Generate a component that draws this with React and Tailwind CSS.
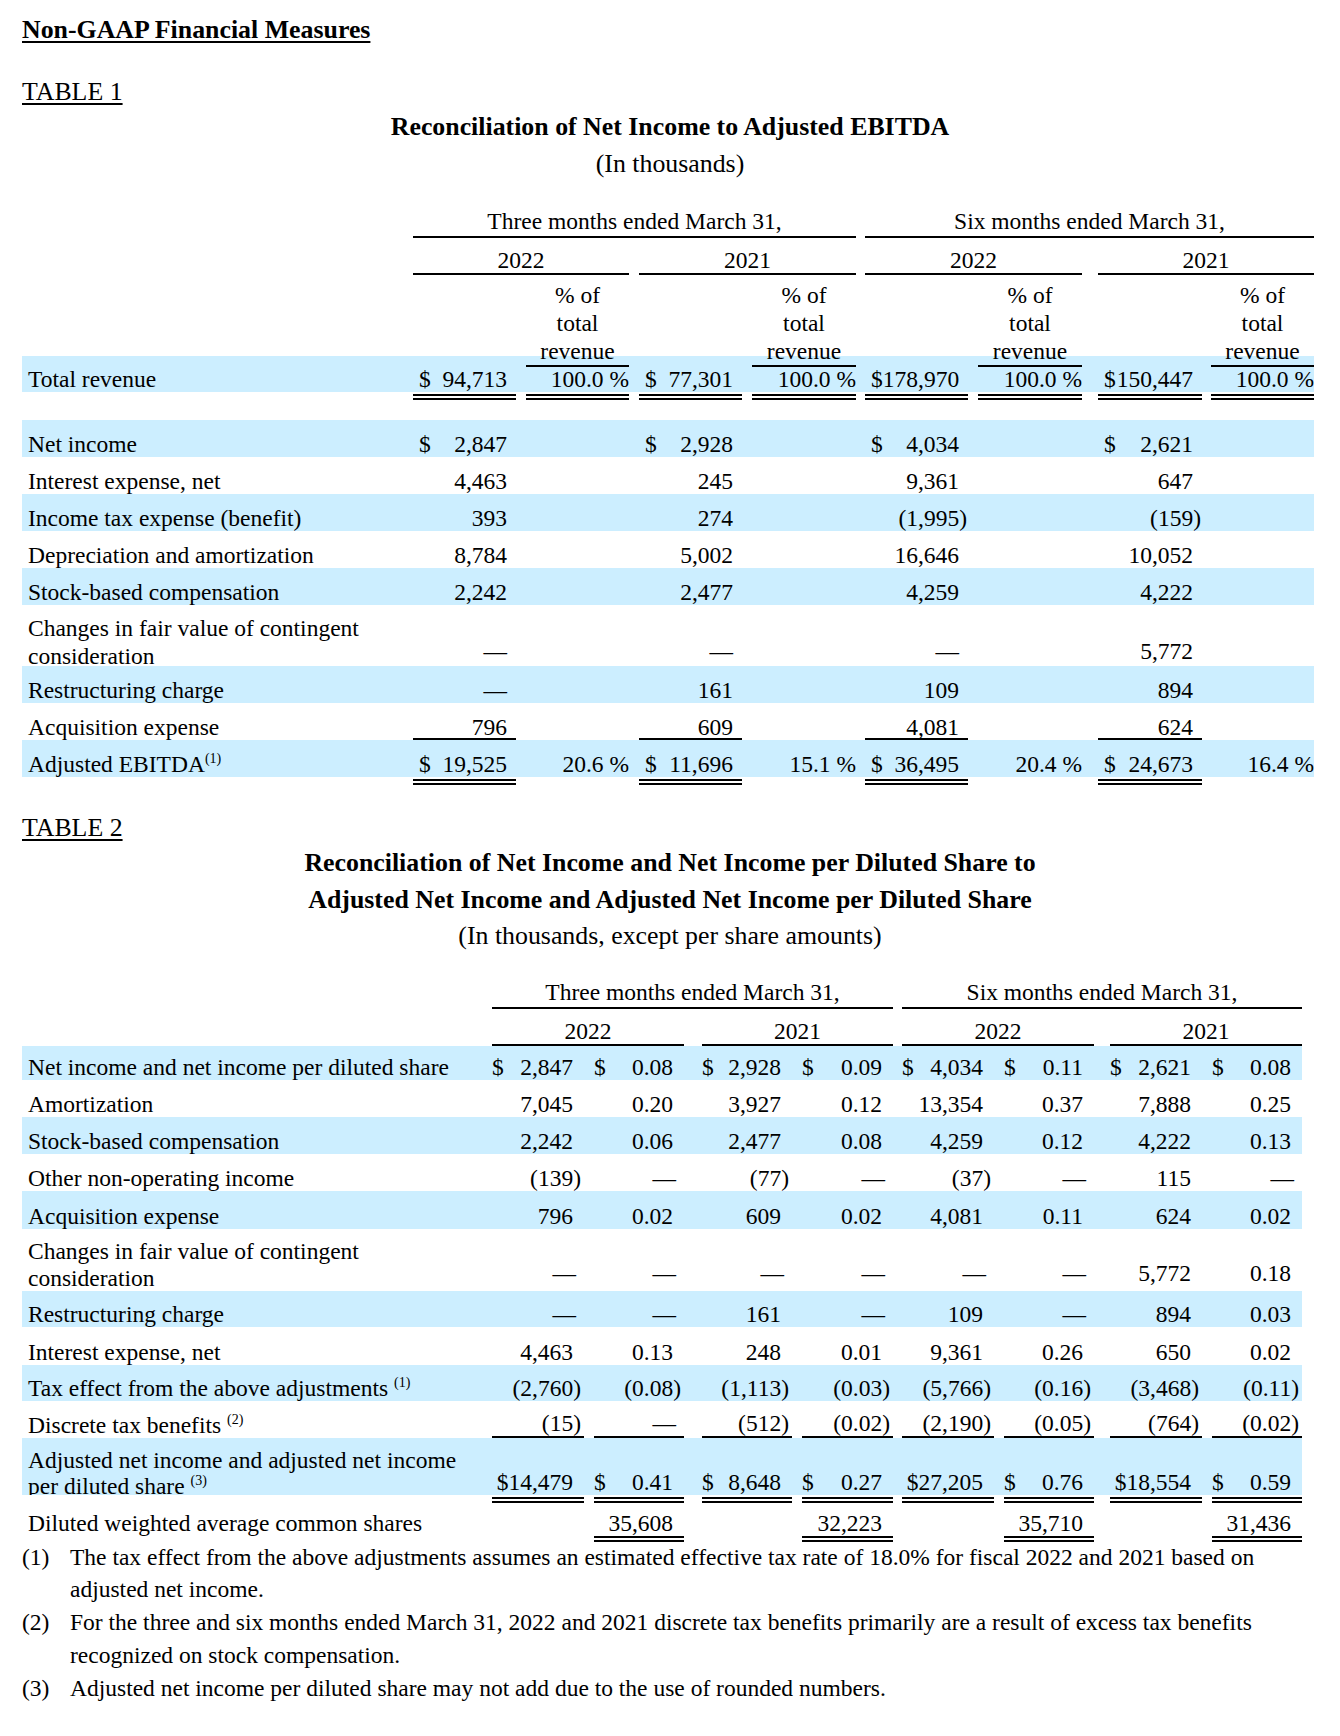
import React from 'react'

const SERIF = "font-['Liberation_Serif','Times_New_Roman',serif]"
const BLUE = 'bg-[#cceeff]'

// gap classes must be literal so Tailwind picks them up
const PL = { 0: '', 9: 'pl-[9px]', 10: 'pl-[10px]', 16: 'pl-[16px]', 18: 'pl-[18px]' }

const T1 = {
  cols: 'grid-cols-[391px_103px_113px_113px_114px_112px_114px_120px_112px]',
  gaps: [0, 0, 10, 10, 10, 9, 10, 16, 9],
  numPad: 'pl-[6px] pr-[9px]',
  dashPad: 'pl-[6px] pr-[9px]',
  pct: true,
}
const T2 = {
  cols: 'grid-cols-[470px_92px_100px_108px_101px_101px_100px_108px_100px]',
  gaps: [0, 0, 10, 18, 10, 9, 10, 16, 10],
  numPad: 'pr-[11px]',
  dashPad: 'pr-[8px]',
  pct: false,
}

const EIGHT = [0, 1, 2, 3, 4, 5, 6, 7]

// which value columns get a rule: 'A' = amounts, 'S' = second col of each pair, 'all'
const pick = (which, i) => which === 'all' || (which === 'A' && i % 2 === 0) || (which === 'S' && i % 2 === 1)

function Val({ v, t }) {
  if (!v) return null
  const [sym, num, tight] = Array.isArray(v) ? v : [null, v]
  const neg = num.endsWith(')')
  const pad = num === '—' ? t.dashPad : t.numPad
  if (tight) {
    return <div className={`w-full whitespace-nowrap text-right ${pad}`}>{sym + num}</div>
  }
  return (
    <div className={`flex w-full items-end justify-between whitespace-nowrap ${pad}`}>
      <span>{sym}</span>
      <span>
        {neg ? (
          <>
            {num.slice(0, -1)}
            <span className="-mr-[8px]">)</span>
          </>
        ) : (
          num
        )}
      </span>
    </div>
  )
}

function Row({ t, blue, h, label, vals = [], under, pb = '', labelCls = '', textCls = '', clip }) {
  return (
    <div className={`grid w-max ${t.cols} ${h} ${blue ? BLUE : ''} ${clip ? 'overflow-hidden' : ''}`}>
      <div className={`flex items-end pl-[6px] ${labelCls || 'leading-[26px]'}`}>
        <div>{label}</div>
      </div>
      {vals.map((v, i) => (
        <div key={i} className={`flex ${PL[t.gaps[i + 1]]}`}>
          <div
            className={`flex h-full w-full items-end leading-[26px] ${pb} ${
              pick(under, i) ? 'border-b-2 border-black' : ''
            }`}
          >
            <div className={`w-full ${textCls}`}>
              {t.pct && i % 2 === 1 ? (
                <div className="w-full whitespace-nowrap text-right">{v}</div>
              ) : (
                <Val v={v} t={t} />
              )}
            </div>
          </div>
        </div>
      ))}
    </div>
  )
}

function Dbl({ t, which, h = 'h-[8px]' }) {
  return (
    <div className={`grid w-max ${t.cols} ${h}`}>
      <div />
      {EIGHT.map((i) => (
        <div key={i} className={PL[t.gaps[i + 1]]}>
          {pick(which, i) && <div className="h-full border-b-[6px] border-double border-black" />}
        </div>
      ))}
    </div>
  )
}

function PeriodHead({ t, mt, gapSix, yearGaps }) {
  return (
    <>
      <div className={`grid w-max ${t.cols} ${mt} text-center leading-[26px]`}>
        <div />
        <div className="col-span-4">
          <div className="border-b-2 border-black pb-[2px]">Three months ended March 31,</div>
        </div>
        <div className={`col-span-4 ${PL[gapSix]}`}>
          <div className="border-b-2 border-black pb-[2px]">Six months ended March 31,</div>
        </div>
      </div>
      <div className={`grid w-max ${t.cols} mt-[9px] text-center leading-[26px]`}>
        <div />
        {['2022', '2021', '2022', '2021'].map((y, i) => (
          <div key={i} className={`col-span-2 ${PL[yearGaps[i]]}`}>
            <div className="border-b-2 border-black">{y}</div>
          </div>
        ))}
      </div>
    </>
  )
}

const Sup = ({ n }) => <sup className="-top-[9px] text-[14px]">({n})</sup>

const D = '—'

const table1 = [
  { label: 'Net income', blue: true, vals: [['$', '2,847'], '', ['$', '2,928'], '', ['$', '4,034'], '', ['$', '2,621'], ''] },
  { label: 'Interest expense, net', vals: ['4,463', '', '245', '', '9,361', '', '647', ''] },
  { label: 'Income tax expense (benefit)', blue: true, vals: ['393', '', '274', '', '(1,995)', '', '(159)', ''] },
  { label: 'Depreciation and amortization', vals: ['8,784', '', '5,002', '', '16,646', '', '10,052', ''] },
  { label: 'Stock-based compensation', blue: true, vals: ['2,242', '', '2,477', '', '4,259', '', '4,222', ''] },
  {
    label: (
      <>
        Changes in fair value of contingent
        <br />
        consideration
      </>
    ),
    h: 'h-[61px]',
    pb: 'pb-[2px]',
    labelCls: 'leading-[27.5px] -mb-[4px]',
    vals: [D, '', D, '', D, '', '5,772', ''],
  },
  { label: 'Restructuring charge', blue: true, vals: [D, '', '161', '', '109', '', '894', ''] },
  { label: 'Acquisition expense', under: 'A', textCls: '-mb-[2px]', vals: ['796', '', '609', '', '4,081', '', '624', ''] },
  {
    label: (
      <>
        Adjusted EBITDA<Sup n={1} />
      </>
    ),
    blue: true,
    vals: [['$', '19,525'], '20.6 %', ['$', '11,696'], '15.1 %', ['$', '36,495'], '20.4 %', ['$', '24,673'], '16.4 %'],
  },
]

const table2 = [
  {
    label: 'Net income and net income per diluted share',
    blue: true,
    h: 'h-[34px]',
    vals: [['$', '2,847'], ['$', '0.08'], ['$', '2,928'], ['$', '0.09'], ['$', '4,034'], ['$', '0.11'], ['$', '2,621'], ['$', '0.08']],
  },
  { label: 'Amortization', vals: ['7,045', '0.20', '3,927', '0.12', '13,354', '0.37', '7,888', '0.25'] },
  { label: 'Stock-based compensation', blue: true, vals: ['2,242', '0.06', '2,477', '0.08', '4,259', '0.12', '4,222', '0.13'] },
  { label: 'Other non-operating income', vals: ['(139)', D, '(77)', D, '(37)', D, '115', D] },
  { label: 'Acquisition expense', blue: true, h: 'h-[38px]', vals: ['796', '0.02', '609', '0.02', '4,081', '0.11', '624', '0.02'] },
  {
    label: (
      <>
        Changes in fair value of contingent
        <br />
        consideration
      </>
    ),
    h: 'h-[62px]',
    pb: 'pb-[5px]',
    labelCls: 'leading-[27.5px] -mb-[2px]',
    vals: [D, D, D, D, D, D, '5,772', '0.18'],
  },
  { label: 'Restructuring charge', blue: true, h: 'h-[36px]', vals: [D, D, '161', D, '109', D, '894', '0.03'] },
  { label: 'Interest expense, net', h: 'h-[38px]', vals: ['4,463', '0.13', '248', '0.01', '9,361', '0.26', '650', '0.02'] },
  {
    label: (
      <>
        Tax effect from the above adjustments <Sup n={1} />
      </>
    ),
    blue: true,
    h: 'h-[36px]',
    vals: ['(2,760)', '(0.08)', '(1,113)', '(0.03)', '(5,766)', '(0.16)', '(3,468)', '(0.11)'],
  },
  {
    label: (
      <>
        Discrete tax benefits <Sup n={2} />
      </>
    ),
    h: 'h-[37px]',
    under: 'all',
    vals: ['(15)', D, '(512)', '(0.02)', '(2,190)', '(0.05)', '(764)', '(0.02)'],
  },
  {
    label: (
      <>
        Adjusted net income and adjusted net income
        <br />
        per diluted share <Sup n={3} />
      </>
    ),
    blue: true,
    h: 'h-[57px]',
    clip: true,
    labelCls: 'leading-[26px] -mb-[4px]',
    vals: [
      ['$', '14,479', true],
      ['$', '0.41'],
      ['$', '8,648'],
      ['$', '0.27'],
      ['$', '27,205', true],
      ['$', '0.76'],
      ['$', '18,554', true],
      ['$', '0.59'],
    ],
  },
]

const notes = [
  ['(1)', 'The tax effect from the above adjustments assumes an estimated effective tax rate of 18.0% for fiscal 2022 and 2021 based on adjusted net income.'],
  ['(2)', 'For the three and six months ended March 31, 2022 and 2021 discrete tax benefits primarily are a result of excess tax benefits recognized on stock compensation.'],
  ['(3)', 'Adjusted net income per diluted share may not add due to the use of rounded numbers.'],
]

export default function App() {
  return (
    <div className={`min-h-[1736px] w-[1340px] bg-white px-[22px] text-[23.5px] text-black ${SERIF}`}>
      <h1 className="pt-[15px] text-[25.85px] font-bold leading-[30px] underline decoration-[2px] underline-offset-[3px]">
        Non-GAAP Financial Measures
      </h1>

      {/* Table 1 */}
      <p className="mt-[32px] text-[25.85px] leading-[30px] underline decoration-[1.5px] underline-offset-[3px]">TABLE 1</p>
      <div className="mt-[1px] text-center text-[25.85px] leading-[37px]">
        <p className="font-bold">Reconciliation of Net Income to Adjusted EBITDA</p>
        <p>(In thousands)</p>
      </div>

      <PeriodHead t={T1} mt="mt-[26px]" gapSix={9} yearGaps={[0, 10, 9, 16]} />
      {/* "revenue" is cut by the rule in the source, kept that way */}
      <div className={`grid w-max ${T1.cols} h-[81px]`}>
        <div />
        {EIGHT.map((i) => (
          <div key={i} className={PL[T1.gaps[i + 1]]}>
            {i % 2 === 1 && (
              <div className="h-full overflow-hidden border-b-2 border-black pt-[6px] text-center leading-[28px]">
                % of
                <br />
                total
                <br />
                revenue
              </div>
            )}
          </div>
        ))}
      </div>
      <Row
        t={T1}
        blue
        h="h-[36px]"
        label="Total revenue"
        vals={[['$', '94,713'], '100.0 %', ['$', '77,301'], '100.0 %', ['$', '178,970'], '100.0 %', ['$', '150,447'], '100.0 %']}
      />
      <Dbl t={T1} which="all" />
      <div className="mt-[20px]">
        {table1.map((r, i) => (
          <Row key={i} t={T1} h={r.h || 'h-[37px]'} {...r} />
        ))}
      </div>
      <Dbl t={T1} which="A" />

      {/* Table 2 */}
      <p className="mt-[28px] text-[25.85px] leading-[30px] underline decoration-[1.5px] underline-offset-[3px]">TABLE 2</p>
      <div className="mt-[2px] text-center text-[25.85px] leading-[36.5px]">
        <p className="font-bold">Reconciliation of Net Income and Net Income per Diluted Share to</p>
        <p className="font-bold">Adjusted Net Income and Adjusted Net Income per Diluted Share</p>
        <p>(In thousands, except per share amounts)</p>
      </div>

      <PeriodHead t={T2} mt="mt-[24px]" gapSix={9} yearGaps={[0, 18, 9, 16]} />
      {table2.map((r, i) => (
        <Row key={i} t={T2} h={r.h || 'h-[37px]'} {...r} />
      ))}
      <Dbl t={T2} which="all" />
      <Row
        t={T2}
        h="h-[33px]"
        label="Diluted weighted average common shares"
        vals={['', '35,608', '', '32,223', '', '35,710', '', '31,436']}
      />
      <Dbl t={T2} which="S" h="h-[6px]" />

      {/* Footnotes */}
      <div className="-mt-[1px] w-[1296px] leading-[32.8px]">
        {notes.map(([n, txt]) => (
          <div key={n} className="grid grid-cols-[48px_1fr]">
            <span>{n}</span>
            <span>{txt}</span>
          </div>
        ))}
      </div>
    </div>
  )
}
